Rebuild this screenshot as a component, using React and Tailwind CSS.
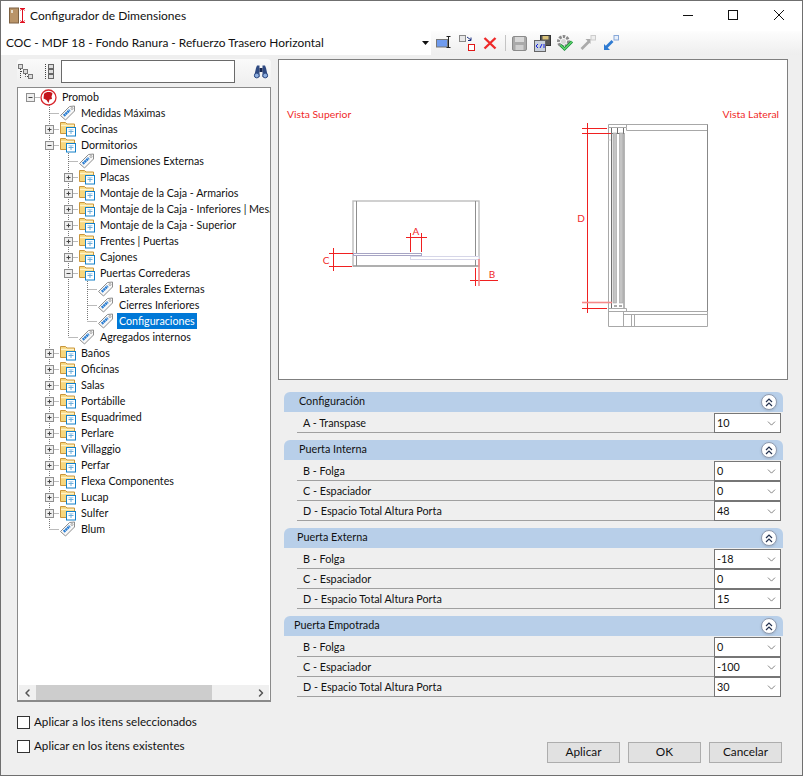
import { ChevronDown, ChevronLeft, ChevronRight } from "lucide-react";

const treeRows = [
  { label: "Promob", kind: "root", box: "minus", guides: [], isRootRow: true },
  { label: "Medidas Máximas", kind: "tag", guides: [false] },
  { label: "Cocinas", kind: "folder", box: "plus", guides: [false] },
  { label: "Dormitorios", kind: "folder", box: "minus", guides: [false] },
  { label: "Dimensiones Externas", kind: "tag", guides: [false, true] },
  { label: "Placas", kind: "folder", box: "plus", guides: [false, true] },
  { label: "Montaje de la Caja - Armarios", kind: "folder", box: "plus", guides: [false, true] },
  { label: "Montaje de la Caja - Inferiores | Mesadas", kind: "folder", box: "plus", guides: [false, true] },
  { label: "Montaje de la Caja - Superior", kind: "folder", box: "plus", guides: [false, true] },
  { label: "Frentes | Puertas", kind: "folder", box: "plus", guides: [false, true] },
  { label: "Cajones", kind: "folder", box: "plus", guides: [false, true] },
  { label: "Puertas Correderas", kind: "folder", box: "minus", guides: [false, true] },
  { label: "Laterales Externas", kind: "tag", guides: [false, true, true] },
  { label: "Cierres Inferiores", kind: "tag", guides: [false, true, true] },
  { label: "Configuraciones", kind: "tag", guides: [false, true, true], last: true, selected: true },
  { label: "Agregados internos", kind: "tag", guides: [false, true], last: true },
  { label: "Baños", kind: "folder", box: "plus", guides: [false] },
  { label: "Oficinas", kind: "folder", box: "plus", guides: [false] },
  { label: "Salas", kind: "folder", box: "plus", guides: [false] },
  { label: "Portábille", kind: "folder", box: "plus", guides: [false] },
  { label: "Esquadrimed", kind: "folder", box: "plus", guides: [false] },
  { label: "Perlare", kind: "folder", box: "plus", guides: [false] },
  { label: "Villaggio", kind: "folder", box: "plus", guides: [false] },
  { label: "Perfar", kind: "folder", box: "plus", guides: [false] },
  { label: "Flexa Componentes", kind: "folder", box: "plus", guides: [false] },
  { label: "Lucap", kind: "folder", box: "plus", guides: [false] },
  { label: "Sulfer", kind: "folder", box: "plus", guides: [false] },
  { label: "Blum", kind: "tag", guides: [false], last: true },
];

const groups = [
  { title: "Configuración", pad: "pl-[15px]", rows: [["A - Transpase", "10"]] },
  {
    title: "Puerta Interna",
    pad: "pl-[15px]",
    rows: [["B - Folga", "0"], ["C - Espaciador", "0"], ["D - Espacio Total Altura Porta", "48"]],
  },
  {
    title: "Puerta Externa",
    pad: "pl-[13px]",
    rows: [["B - Folga", "-18"], ["C - Espaciador", "0"], ["D - Espacio Total Altura Porta", "15"]],
  },
  {
    title: "Puerta Empotrada",
    pad: "pl-[10px]",
    rows: [["B - Folga", "0"], ["C - Espaciador", "-100"], ["D - Espacio Total Altura Porta", "30"]],
  },
];

function TagIcon() {
  return (
    <svg width="17" height="16" viewBox="0 0 17 16">
      <path d="M1.5 10.5 L10.5 1.5 L15.5 1 L15.5 6 L6.5 15 Z" fill="#f8f8f8" stroke="#8d8d8d" />
      <path d="M4.8 10.8 L10.8 5" stroke="#2b7ed2" strokeWidth="2.6" strokeDasharray="2 0.5" />
      <circle cx="13" cy="3.5" r="1" fill="#fff" stroke="#777" strokeWidth="0.6" />
    </svg>
  );
}

function FolderIcon() {
  return (
    <svg width="18" height="16" viewBox="0 0 18 16">
      <path d="M1.5 12.5 V1.5 H6.5 L8 3 H15.5 V12.5 Z" fill="#f7d77e" stroke="#c9963d" />
      <path d="M2 4.5 H15" stroke="#fff3c9" strokeWidth="1.4" />
      <rect x="7.5" y="6.5" width="9" height="8.5" fill="#fff" stroke="#1480c8" />
      <path d="M9.5 10.5 H14.5 M12 8.5 V13" stroke="#6aaedc" />
      <path d="M9.5 8.7 H14.5" stroke="#a8cfea" />
    </svg>
  );
}

function PromobIcon() {
  return (
    <svg width="17" height="17" viewBox="0 0 17 17">
      <circle cx="8.5" cy="8.5" r="7.5" fill="#fff" stroke="#d8272d" strokeWidth="1.3" />
      <path d="M4 5 C6 2.5 11 2.5 12.5 4.5 L11.5 7.5 L12 10 L9.5 10.5 L8.5 14 L6.5 11 L3.5 9.5 Z" fill="#c4141c" />
    </svg>
  );
}

function GuideCell({ on }) {
  return (
    <svg width="19" height="16" className="shrink-0">
      {on && <path d="M9.5 0 V16" stroke="#777" strokeDasharray="1 1" />}
    </svg>
  );
}

function BranchCell({ box, last, isRootRow }) {
  return (
    <svg width="19" height="16" className="shrink-0">
      {!isRootRow && <path d={last ? "M9.5 0 V8" : "M9.5 0 V16"} stroke="#777" strokeDasharray="1 1" />}
      <path d="M9.5 8.5 H19" stroke="#777" strokeDasharray="1 1" />
      {box && (
        <g>
          <rect x="5.5" y="4.5" width="8" height="8" fill="#eeeeee" stroke="#8f8f8f" />
          <path d="M7.5 8.5 H11.5" stroke="#444" />
          {box === "plus" && <path d="M9.5 6.5 V10.5" stroke="#444" />}
        </g>
      )}
    </svg>
  );
}

function TreeRow({ row }) {
  return (
    <div className="flex h-4 items-center whitespace-nowrap">
      {row.guides.map((on, i) => (
        <GuideCell key={i} on={on} />
      ))}
      <BranchCell box={row.box} last={row.last} isRootRow={row.isRootRow} />
      <div className="flex w-5 shrink-0 items-center">
        {row.kind === "root" && <PromobIcon />}
        {row.kind === "tag" && <TagIcon />}
        {row.kind === "folder" && <FolderIcon />}
      </div>
      <span className={"px-[2px] leading-4 " + (row.selected ? "bg-[#0078d7] text-white" : "text-[#111]")}>
        {row.label}
      </span>
    </div>
  );
}

function TitleBar() {
  return (
    <div className="flex h-[30px] shrink-0 items-center bg-white">
      <svg width="18" height="18" viewBox="0 0 18 18" className="ml-[8px] shrink-0">
        <rect x="0.5" y="1" width="9" height="15" fill="#b99468" stroke="#7d6142" />
        <rect x="2" y="3" width="2" height="3" fill="#e6dccb" />
        <path d="M13.5 1 V16 M11 1.5 H16 M11 15.5 H16 M11.5 3.5 L13.5 1 L15.5 3.5 M11.5 13.5 L13.5 16 L15.5 13.5" stroke="#e01020" fill="none" />
      </svg>
      <span className="ml-[3px] text-xs text-[#111]">Configurador de Dimensiones</span>
      <div className="ml-auto flex items-center">
        <svg width="46" height="30" viewBox="0 0 46 30">
          <path d="M17 14.5 H27" stroke="#111" />
        </svg>
        <svg width="45" height="30" viewBox="0 0 45 30">
          <rect x="16.5" y="9.5" width="9" height="9" fill="none" stroke="#111" />
        </svg>
        <svg width="45" height="30" viewBox="0 0 45 30">
          <path d="M17 9 L27 19 M27 9 L17 19" stroke="#111" />
        </svg>
      </div>
    </div>
  );
}

function Toolbar() {
  return (
    <div className="flex h-[24px] shrink-0 items-center bg-gradient-to-b from-[#fdfdfd] to-[#eeeeee]">
      <div className="flex h-full w-[430px] shrink-0 items-center bg-white pl-[5px]">
        <span className="text-[11.9px] text-[#111]">COC - MDF 18 - Fondo Ranura - Refuerzo Trasero Horizontal</span>
        <svg width="7" height="4" viewBox="0 0 7 4" className="ml-auto mr-[2px]">
          <path d="M0 0 H7 L3.5 4 Z" fill="#111" />
        </svg>
      </div>
      <div className="flex items-center">
        <svg width="16" height="16" viewBox="0 0 16 16" className="ml-[5px]">
          <rect x="0.5" y="4.5" width="11" height="7.5" fill="#6f9bee" stroke="#777" />
          <path d="M10.5 1.5 H14.5 M12.5 1.5 V12.5 M10.5 12.5 H14.5" stroke="#222" />
        </svg>
        <svg width="17" height="17" viewBox="0 0 17 17" className="ml-[7px]">
          <rect x="0.5" y="0.5" width="6" height="6" fill="#e8e8e8" stroke="#888" />
          <rect x="9.5" y="9.5" width="6" height="6" fill="#fff" stroke="#e01818" />
          <path d="M8 2 L12 5 M12 2.5 V5.5 H9" stroke="#1a2f80" fill="none" />
        </svg>
        <svg width="14" height="14" viewBox="0 0 14 14" className="ml-[7px]">
          <path d="M1.5 2 L12.5 12.5 M12.5 2 L1.5 12.5" stroke="#ee2a2a" strokeWidth="2.4" />
        </svg>
        <div className="ml-[8px] h-[16px] w-px bg-[#c4c4c4]" />
        <svg width="15" height="15" viewBox="0 0 15 15" className="ml-[6px]">
          <rect x="0.5" y="0.5" width="14" height="14" rx="1.5" fill="#a9a9a9" stroke="#8b8b8b" />
          <rect x="3" y="1" width="9" height="5" fill="#d8d8d8" />
          <rect x="3.5" y="9" width="8" height="5" fill="#cfcfcf" />
        </svg>
        <svg width="17" height="17" viewBox="0 0 17 17" className="ml-[7px]">
          <rect x="6.5" y="0.5" width="10" height="10" fill="#555" stroke="#333" />
          <rect x="8.5" y="1" width="6" height="3.5" fill="#d9c27a" />
          <rect x="0.5" y="5.5" width="11" height="11" fill="#c8d0dc" stroke="#666" />
          <path d="M4 9 L2 11 L4 13 M6 13 L8 9 M9 10 H11 M9 12 H11" stroke="#1420e0" fill="none" />
        </svg>
        <svg width="18" height="18" viewBox="0 0 18 18" className="ml-[5px]">
          <circle cx="7.5" cy="7.5" r="5" fill="none" stroke="#8b8b8b" strokeWidth="3" strokeDasharray="2.5 1.2" />
          <circle cx="7.5" cy="7.5" r="2.5" fill="#d8d8d8" />
          <path d="M4.5 11 L8.5 15 L16 7.5" fill="none" stroke="#178a3a" strokeWidth="3" />
          <path d="M4.5 11 L8.5 15 L16 7.5" fill="none" stroke="#63d86d" strokeWidth="1.3" />
        </svg>
        <svg width="16" height="16" viewBox="0 0 16 16" className="ml-[6px]">
          <rect x="11" y="0.5" width="4.5" height="4.5" fill="#eee" stroke="#ccc" />
          <path d="M1.5 14 L9 6.5" stroke="#aaa" strokeWidth="2.6" />
          <path d="M5.5 4 H10.5 V9 Z" fill="#aaa" />
        </svg>
        <svg width="16" height="16" viewBox="0 0 16 16" className="ml-[7px]">
          <rect x="11" y="0.5" width="4.5" height="4.5" fill="#e8f0fb" stroke="#88a8d8" />
          <path d="M9.5 6 L3 12.5" stroke="#2f7bd2" strokeWidth="2.8" />
          <path d="M1 9 V15 H7 Z" fill="#2f7bd2" />
        </svg>
      </div>
    </div>
  );
}

function SearchBar() {
  return (
    <div className="flex h-[25px] items-center rounded-t-sm bg-gradient-to-b from-[#fafafa] to-[#efefef]">
      <svg width="16" height="16" viewBox="0 0 16 16" className="ml-[1px]">
        <rect x="0.5" y="0.5" width="4" height="4" fill="#ddd" stroke="#777" />
        <rect x="5.5" y="5.5" width="4" height="4" fill="#ddd" stroke="#777" />
        <rect x="10.5" y="10.5" width="4" height="4" fill="#ddd" stroke="#777" />
        <path d="M2.5 5 V15 M3 7.5 H5.5 M7.5 10 V12.5 H10" stroke="#444" strokeDasharray="1 1" fill="none" />
      </svg>
      <svg width="12" height="18" viewBox="0 0 12 18" className="ml-[10px]">
        <path d="M1.5 1 V17" stroke="#444" strokeDasharray="1 1" />
        <g stroke="#666" fill="#ddd">
          <rect x="4.5" y="1.5" width="5" height="4" />
          <rect x="4.5" y="6.5" width="5" height="4" />
          <rect x="4.5" y="11.5" width="5" height="4" />
        </g>
      </svg>
      <div className="ml-[5px] h-[23px] w-[174px] border border-[#6a6a6a] bg-white" />
      <svg width="16" height="16" viewBox="0 0 16 16" className="ml-[18px]">
        <path d="M1 13 L3 4 L4 1.5 H6.5 V13 Z M15 13 L13 4 L12 1.5 H9.5 V13 Z" fill="#2f4a82" />
        <rect x="6.5" y="4" width="3" height="4" fill="#16264f" />
        <circle cx="3.8" cy="11.5" r="2.4" fill="#8fb0e0" stroke="#2f4a82" />
        <circle cx="12.2" cy="11.5" r="2.4" fill="#8fb0e0" stroke="#2f4a82" />
      </svg>
    </div>
  );
}

function Tree() {
  return (
    <div className="mt-[3px] flex h-[615px] flex-col border border-b-2 border-[#8a8a8a] bg-white text-[10.7px]">
      <div className="min-h-0 flex-1 overflow-hidden pl-[3px] pt-px">
        {treeRows.map((row) => (
          <TreeRow key={row.label} row={row} />
        ))}
      </div>
      <div className="mx-px flex h-[15px] shrink-0 items-center bg-[#f0f0f0]">
        <ChevronLeft size={12} strokeWidth={3} className="ml-[2px] w-[13px] text-[#555]" />
        <div className="ml-[2px] h-full w-[176px] bg-[#cdcdcd]" />
        <ChevronRight size={12} strokeWidth={3} className="ml-auto mr-[2px] text-[#555]" />
      </div>
    </div>
  );
}

function CheckLine({ label }) {
  return (
    <label className="flex h-[13px] items-center text-[#111]">
      <span className="h-[13px] w-[13px] border border-[#333] bg-white" />
      <span className="mb-[2px] ml-[4px] text-[11.65px]">{label}</span>
    </label>
  );
}

function Preview() {
  return (
    <div className="h-[321px] border border-[#7f7f7f] bg-white">
      <svg width="508" height="319" viewBox="279 60 508 319" className="block" fontFamily="Lato, sans-serif">
        <text x="287" y="118" fontSize="10.4" fill="#f02a2a">Vista Superior</text>
        <text x="779" y="118" fontSize="10.4" fill="#f02a2a" textAnchor="end">Vista Lateral</text>

        {/* vista superior */}
        <rect x="353" y="201" width="126" height="65" fill="none" stroke="#bdbdbd" strokeWidth="1.4" />
        <path d="M356.5 201 V266 M475.5 201 V266 M353 266 H479" stroke="#8e8e8e" fill="none" />
        <rect x="353.5" y="253.5" width="68" height="2" fill="#fff" stroke="#a7a5c4" />
        <rect x="410.5" y="256.5" width="68.5" height="3" fill="#fff" stroke="#d6d6e8" />
        <path d="M410.5 233 V252 M421.5 233 V252 M406 237.5 H427 M329 253.5 H353 M329 266.5 H352 M333.5 248 V271 M475.5 268 V286 M470 280.5 H498" stroke="#f02020" fill="none" />
        <path d="M479 259 V286" stroke="#f58a8a" strokeWidth="1.6" />
        <text x="416" y="235" fontSize="10" fill="#f02a2a" textAnchor="middle">A</text>
        <text x="326" y="264" fontSize="10" fill="#f02a2a" textAnchor="middle">C</text>
        <text x="492" y="278" fontSize="10" fill="#f02a2a" textAnchor="middle">B</text>

        {/* vista lateral */}
        <g fill="none" stroke="#a8a8a8">
          <path d="M608.5 124.5 H707.5 V326.5 H608.5 Z" />
          <path d="M608.5 127.5 H626.5 V124.5 M626.5 130.5 H707.5 M626.5 127.5 V130.5" />
          <path d="M608.5 308.5 H626.5 V311.5 M608.5 311.5 H707.5 M623.5 314.5 H707.5 M623.5 311.5 V326.5 M631.5 314.5 V326.5 M634.5 314.5 V326.5" />
          <path d="M608.5 140 H611.5 V133" stroke="#d8d8d8" />
        </g>
        <path d="M707.5 124.5 V311" stroke="#888" fill="none" />
        <path d="M611.5 128 V134 M617.5 128 V134 M623.5 128 V134 M611.5 133.5 H623.5 M611.5 128 V308 M624 133 V308" stroke="#6f6f6f" fill="none" />
        <rect x="613" y="133" width="3.5" height="170" fill="#c4c4c4" stroke="#a0a0a0" strokeWidth="0.6" />
        <rect x="619.5" y="133" width="3.5" height="170" fill="#c4c4c4" stroke="#a0a0a0" strokeWidth="0.6" />
        <path d="M614 306 H617 M619 306 H622" stroke="#555" />
        <path d="M587.5 123 V313 M582 128.5 H607 M582 133.5 H611 M582 308.5 H607" stroke="#f02020" fill="none" />
        <path d="M582 302.5 H612" stroke="#f58a8a" strokeWidth="1.6" />
        <text x="581" y="222" fontSize="10" fill="#f02a2a" textAnchor="middle">D</text>
      </svg>
    </div>
  );
}

function GroupHeader({ title, pad }) {
  return (
    <div className={"flex h-5 items-center rounded-t-md bg-[#b8cfe9] pr-[6px] text-[10.8px] text-[#111] " + pad}>
      <span className="mb-px">{title}</span>
      <div className="ml-auto flex h-4 w-4 items-center justify-center rounded-full border border-[#8f9bb0] bg-white shadow-sm">
        <svg width="8" height="9" viewBox="0 0 8 9">
          <path d="M1 4 L4 1 L7 4 M1 8 L4 5 L7 8" fill="none" stroke="#22304e" strokeWidth="1.2" />
        </svg>
      </div>
    </div>
  );
}

function ValueRow({ label, value }) {
  return (
    <div className="flex h-5 items-center pl-[13px] text-[10.8px] text-[#111]">
      <div className="flex h-full flex-1 items-center border-b border-[#a0a0a0] pl-[6px] pt-[2px]">{label}</div>
      <div className="flex h-full w-[67px] items-center border border-[#767676] bg-white pl-[2px]">
        <span>{value}</span>
        <ChevronDown size={13} strokeWidth={1.2} className="ml-auto mr-[2px] text-[#444]" />
      </div>
    </div>
  );
}

function ActionButton({ label }) {
  return (
    <button className="h-[21px] w-[73px] border border-[#adadad] bg-[#e1e1e1] pb-px text-[11.8px] text-[#111]">{label}</button>
  );
}

export default function App() {
  return (
    <div
      className="flex h-[776px] w-[803px] flex-col overflow-hidden border border-[#6f6f6f] bg-[#efefef]"
      style={{ fontFamily: "Lato, sans-serif" }}
    >
      <TitleBar />
      <Toolbar />
      <div className="flex flex-1 pt-[4px]">
        <div className="ml-[16px] w-[254px] shrink-0">
          <SearchBar />
          <Tree />
          <div className="mt-[14px] flex flex-col gap-[11px]">
            <CheckLine label="Aplicar a los itens seleccionados" />
            <CheckLine label="Aplicar en los itens existentes" />
          </div>
        </div>
        <div className="ml-[7px] w-[510px] shrink-0">
          <Preview />
          <div className="ml-[6px] mt-[12px] flex w-[499px] flex-col gap-[7px]">
            {groups.map((g) => (
              <div key={g.title}>
                <GroupHeader title={g.title} pad={g.pad} />
                <div className="mt-px pr-[2px]">
                  {g.rows.map((r) => (
                    <ValueRow key={r[0]} label={r[0]} value={r[1]} />
                  ))}
                </div>
              </div>
            ))}
          </div>
          <div className="mt-[45px] flex justify-end gap-[8px] pr-[6px]">
            <ActionButton label="Aplicar" />
            <ActionButton label="OK" />
            <ActionButton label="Cancelar" />
          </div>
        </div>
      </div>
    </div>
  );
}
